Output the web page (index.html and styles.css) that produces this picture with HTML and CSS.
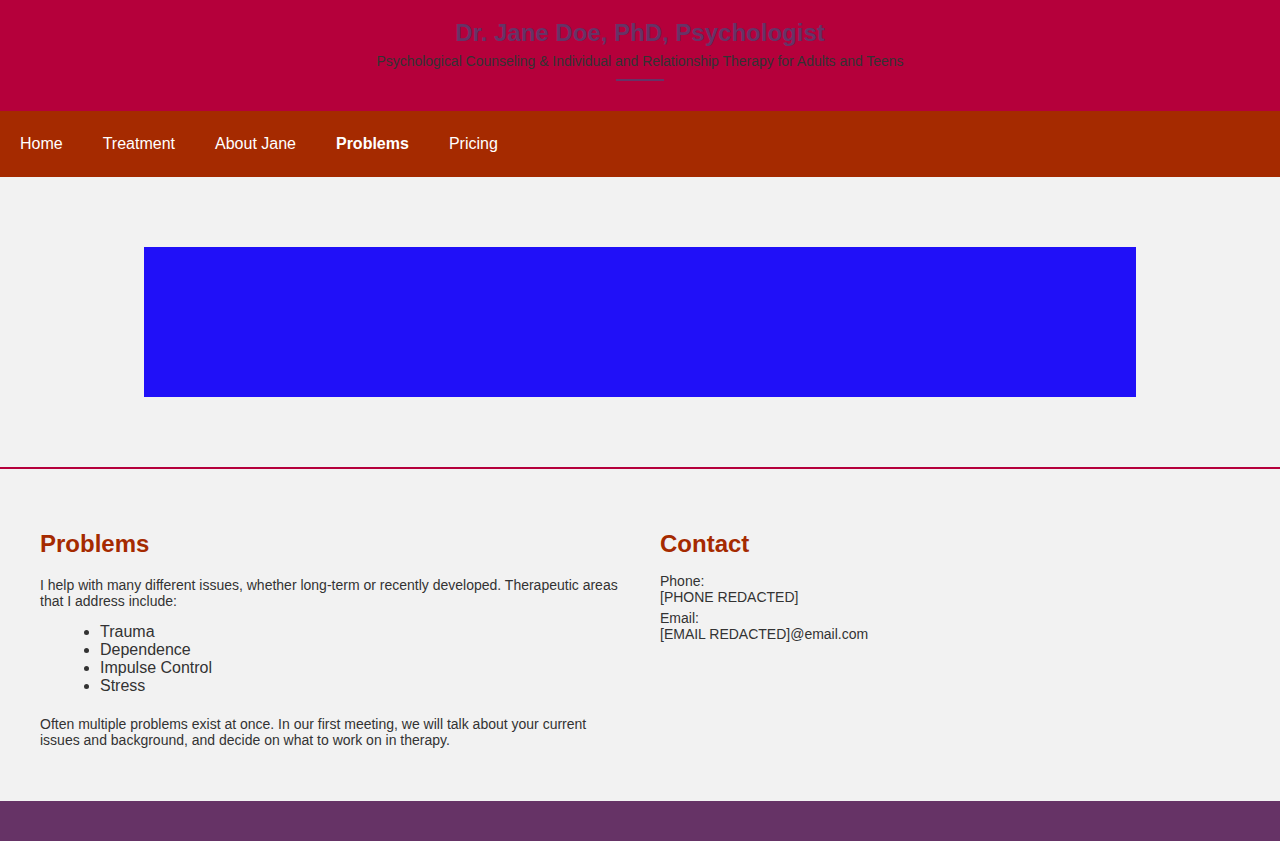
FILE: index.html
```html
<!DOCTYPE html>
<html lang="en">
<head>
<meta charset="utf-8">
<title>Dr. Jane Doe, PhD, Psychologist</title>
<link rel="stylesheet" href="styles.css">
</head>
<body>
<header class="site-header">
  <h1 class="site-title">Dr. Jane Doe, PhD, Psychologist</h1>
  <p class="site-tagline">Psychological Counseling &amp; Individual and Relationship Therapy for Adults and Teens</p>
  <div class="title-rule"></div>
</header>
<nav class="main-nav">
  <a href="#" class="nav-link">Home</a>
  <a href="#" class="nav-link">Treatment</a>
  <a href="#" class="nav-link">About Jane</a>
  <a href="#" class="nav-link active">Problems</a>
  <a href="#" class="nav-link">Pricing</a>
</nav>
<section class="hero">
  <div class="hero-banner"></div>
</section>
<main class="content">
  <div class="col">
    <h2 class="col-title">Problems</h2>
    <p class="text intro">I help with many different issues, whether long-term or recently developed. Therapeutic areas that I address include:</p>
    <ul class="problem-list">
      <li>Trauma</li>
      <li>Dependence</li>
      <li>Impulse Control</li>
      <li>Stress</li>
    </ul>
    <p class="text outro">Often multiple problems exist at once. In our first meeting, we will talk about your current issues and background, and decide on what to work on in therapy.</p>
  </div>
  <div class="col">
    <h2 class="col-title">Contact</h2>
    <p class="text contact">Phone:<br>[PHONE REDACTED]</p>
    <p class="text contact">Email:<br>[EMAIL REDACTED]@email.com</p>
  </div>
</main>
<footer class="site-footer"></footer>
</body>
</html>
```
FILE: styles.css
```css
* { box-sizing: border-box; }
html, body {
  margin: 0;
  padding: 0;
}
body {
  font-family: "Liberation Sans", Arial, sans-serif;
  background: #f2f2f2;
  color: #333333;
}
.site-header {
  background: #b5003b;
  height: 111px;
  padding-top: 19px;
  display: flex;
  flex-direction: column;
  align-items: center;
}
.site-title {
  margin: 0;
  font-size: 24px;
  line-height: 28px;
  font-weight: bold;
  color: #663366;
}
.site-tagline {
  margin: 6px 0 0;
  font-size: 14px;
  line-height: 16px;
  letter-spacing: -0.03px;
  color: #333333;
}
.title-rule {
  width: 48px;
  height: 2px;
  background: #663366;
  margin-top: 10px;
}
.main-nav {
  background: #a52a00;
  height: 66px;
  display: flex;
  align-items: center;
}
.nav-link {
  color: #ffffff;
  text-decoration: none;
  font-size: 16px;
  line-height: 18px;
  padding: 24px 20px;
}
.nav-link.active { font-weight: bold; }
.hero {
  padding: 70px 0;
  border-bottom: 2px solid #b5003b;
}
.hero-banner {
  max-width: 992px;
  height: 150px;
  margin: 0 auto;
  background: #2010f8;
}
.content {
  display: grid;
  grid-template-columns: 1fr 1fr;
  column-gap: 40px;
  padding: 40px;
}
.col-title {
  margin: 21px 0 0;
  font-size: 24px;
  line-height: 28px;
  font-weight: bold;
  color: #a52a00;
}
.text {
  font-size: 14px;
  line-height: 16px;
  margin: 0;
}
.intro { margin-top: 19px; }
.problem-list {
  margin: 14px 0 0;
  padding-left: 60px;
  font-size: 16px;
  line-height: 18px;
}
.outro { margin: 21px 0 13px; }
.contact { margin-top: 5px; }
.col-title + .contact { margin-top: 15px; }
.site-footer {
  background: #663366;
  height: 40px;
}
```
